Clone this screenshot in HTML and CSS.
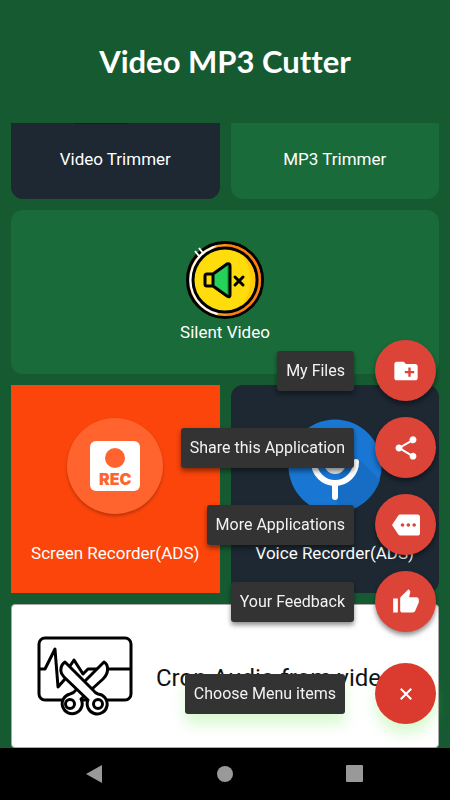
FILE: index.html
```html
<!DOCTYPE html>
<html lang="en">
<head>
<meta charset="utf-8">
<meta name="viewport" content="width=device-width, initial-scale=1">
<title>Video MP3 Cutter</title>
<link rel="stylesheet" href="styles.css">
</head>
<body>
<header class="header"><h1 class="title">Video MP3 Cutter</h1></header>

<main class="cards">
  <button class="card card--dark card--cut"><span class="peek"></span>Video Trimmer</button>
  <button class="card card--green card--cut">MP3 Trimmer</button>

  <button class="card card--green card--wide">
    <svg class="coin" viewBox="0 0 78 78" aria-hidden="true">
      <circle cx="39" cy="39" r="37.5" fill="#ff9a1a" stroke="#000" stroke-width="3"/>
      <path d="M39 3A36 36 0 0 1 39 75A52 52 0 0 0 39 3z" fill="#ff7d0c"/>
      <path d="M31 4A36 36 0 0 0 31 74L34 69A32 32 0 0 1 16 17z" fill="#fff"/>
      <circle cx="39" cy="39" r="32" fill="#ffdc0c" stroke="#000" stroke-width="3"/>
      <path d="M55 13A31 31 0 0 1 55 65A40 40 0 0 0 55 13z" fill="#ffc80c"/>
      <path d="M9 10l4 5M13 7l4 5" stroke="#fff" stroke-width="2"/>
      <path d="M27 32L41 22q4-1 4 2V54q0 3-4 1L27 45z" fill="#26d15a"/>
      <path d="M41 22q4-1 4 2V54q0 3-4 1z" fill="#1fa94b"/>
      <path d="M19 35q0-2 2-2h6V45h-6q-2 0-2-2zM27 33L41 23q3-1 3 2V54q0 3-3 1L27 45z" fill="none" stroke="#000" stroke-width="3" stroke-linejoin="round"/>
      <path d="M49 36l8 8M57 36l-8 8" stroke="#000" stroke-width="3" stroke-linecap="round"/>
    </svg>
    Silent Video
  </button>

  <button class="card card--orange card--tall">
    <span class="rec"><span class="rec-box"><span class="rec-dot"></span><span class="rec-text">REC</span></span></span>
    Screen Recorder(ADS)
  </button>
  <button class="card card--dark card--tall">
    <svg class="mic" viewBox="0 0 96 96" aria-hidden="true">
      <circle cx="48" cy="48" r="46.5" fill="#1976d2"/>
      <path d="M58 28L93 62A47 47 0 0 1 53 94L49 80z" fill="#176dc4"/>
      <rect x="37" y="18" width="22" height="38" rx="11" fill="#e4e4e4"/>
      <path d="M27 44A21 21 0 0 0 69 44M48 65V79" fill="none" stroke="#fff" stroke-width="6" stroke-linecap="round"/>
    </svg>
    Voice Recorder(ADS)
  </button>

  <button class="card card--white card--wide">
    <svg class="crop" viewBox="0 0 96 80" fill="none" stroke="#000" stroke-width="3" stroke-linejoin="round" aria-hidden="true">
      <rect x="2" y="2" width="92" height="62" rx="6"/>
      <path d="M2 33H8L18 13L21 51L28 43M33 30L37 24L46 38L51 33H94"/>
      <path d="M67 26Q72 29 70 37Q69 40 66 43L44 63A10 10 0 1 1 33 58Q37 57 39 54z" fill="#fff"/>
      <path d="M28 26L56 54Q58 57 61 58A10 10 0 1 1 51 64L27 41Q23 37 24 33Q24 29 28 26z" fill="#fff"/>
      <circle cx="33" cy="68" r="4.5"/>
      <circle cx="61" cy="68" r="4.5"/>
    </svg>
    <span class="crop-text">Crop Audio from video</span>
  </button>
</main>

<div class="dial">
  <div class="dial-row">
    <span class="tag" id="files">My Files</span>
    <button class="fab" aria-labelledby="files"><svg viewBox="0 0 24 24"><path d="M20 6h-8l-2-2H4c-1.11 0-1.99.89-1.99 2L2 18c0 1.1.9 2 2 2h16c1.1 0 2-.9 2-2V8c0-1.1-.9-2-2-2zm-1 8h-3v3h-2v-3h-3v-2h3V9h2v3h3v2z"/></svg></button>
  </div>
  <div class="dial-row">
    <span class="tag" id="share">Share this Application</span>
    <button class="fab" aria-labelledby="share"><svg viewBox="0 0 24 24"><path d="M18 16.08c-.76 0-1.44.3-1.96.77L8.91 12.7c.05-.23.09-.46.09-.7s-.04-.47-.09-.7l7.05-4.11c.54.5 1.25.81 2.04.81 1.66 0 3-1.34 3-3s-1.34-3-3-3-3 1.34-3 3c0 .24.04.47.09.7L8.04 9.81C7.5 9.31 6.79 9 6 9c-1.66 0-3 1.34-3 3s1.34 3 3 3c.79 0 1.5-.31 2.04-.81l7.12 4.16c-.05.21-.08.43-.08.65 0 1.61 1.31 2.92 2.92 2.92s2.92-1.31 2.92-2.92-1.31-2.92-2.92-2.92z"/></svg></button>
  </div>
  <div class="dial-row">
    <span class="tag" id="more">More Applications</span>
    <button class="fab" aria-labelledby="more"><svg viewBox="0 0 24 24"><path d="M22 3H7c-.69 0-1.23.35-1.59.88L0 12l5.41 8.11c.36.53.9.89 1.59.89h15c1.1 0 2-.9 2-2V5c0-1.1-.9-2-2-2zM9 13.5c-.83 0-1.5-.67-1.5-1.5s.67-1.5 1.5-1.5 1.5.67 1.5 1.5-.67 1.5-1.5 1.5zm5 0c-.83 0-1.5-.67-1.5-1.5s.67-1.5 1.5-1.5 1.5.67 1.5 1.5-.67 1.5-1.5 1.5zm5 0c-.83 0-1.5-.67-1.5-1.5s.67-1.5 1.5-1.5 1.5.67 1.5 1.5-.67 1.5-1.5 1.5z"/></svg></button>
  </div>
  <div class="dial-row">
    <span class="tag" id="feedback">Your Feedback</span>
    <button class="fab" aria-labelledby="feedback"><svg viewBox="0 0 24 24"><path d="M1 21h4V9H1v12zm22-11c0-1.1-.9-2-2-2h-6.31l.95-4.57.03-.32c0-.41-.17-.79-.44-1.06L14.17 1 7.59 7.59C7.22 7.95 7 8.45 7 9v10c0 1.1.9 2 2 2h9c.83 0 1.54-.5 1.84-1.22l3.02-7.05c.09-.23.14-.47.14-.73v-2z"/></svg></button>
  </div>
  <div class="dial-row dial-row--main">
    <span class="tag" id="choose">Choose Menu items</span>
    <button class="fab" aria-labelledby="choose"><svg viewBox="0 0 24 24"><path d="M7.5 7.5l9 9M16.5 7.5l-9 9" stroke="#fff" stroke-width="1.8"/></svg></button>
  </div>
</div>

<nav class="nav">
  <button aria-label="Back"><svg viewBox="0 0 18 18"><path d="M0 9L16 0V18z"/></svg></button>
  <button aria-label="Home"><svg viewBox="0 0 18 18"><circle cx="9" cy="9" r="8"/></svg></button>
  <button aria-label="Recent apps"><svg viewBox="0 0 18 18"><rect x="0" y="0" width="17" height="17" rx="1"/></svg></button>
</nav>
</body>
</html>
```
FILE: styles.css
```css
* { box-sizing: border-box; }

body {
  margin: 0;
  min-height: 100vh;
  display: flex;
  flex-direction: column;
  background: #165a32;
  color: #fff;
  font-family: Roboto, sans-serif;
}

button {
  border: 0;
  padding: 0;
  color: inherit;
  font: inherit;
  cursor: pointer;
}

svg { display: block; }

.header {
  height: 123px;
  display: flex;
  align-items: center;
  justify-content: center;
  padding-bottom: 2px;
}

.title {
  margin: 0;
  font: 700 31px/40px Lato, sans-serif;
  font-variant-ligatures: none;
}

.cards {
  flex: 1;
  display: grid;
  grid-template-columns: 1fr 1fr;
  grid-template-rows: auto auto auto 1fr;
  gap: 11px;
  padding: 0 11px;
}

.card {
  display: flex;
  flex-direction: column;
  align-items: center;
  border-radius: 12px;
  font-size: 17px;
  line-height: 24px;
}

.card--wide { grid-column: 1 / -1; padding: 31px 0 30px; gap: 1px; }
.card--dark { background: #1d2833; }
.card--green { background: #1a6b3a; }
.card--orange { background: #fb450a; border-radius: 0; }
.card--tall { padding: 33px 0 28px; gap: 27px; }

.card--cut {
  position: relative;
  padding: 24px 0 28px;
  border-radius: 0 0 12px 12px;
}

.peek {
  position: absolute;
  top: 0;
  left: 30%;
  width: 26%;
  height: 1px;
  background: #10241c;
}

.card--white {
  flex-direction: row;
  gap: 23px;
  padding: 31px 25px;
  border: 1px solid #a9a9a9;
  border-radius: 4px;
  background: #fff;
  color: #111;
}

.coin { width: 78px; height: 78px; }
.mic { width: 96px; height: 96px; }
.crop { width: 96px; height: 80px; flex: none; }

.crop-text {
  padding-top: 4px;
  font-size: 24px;
  line-height: 32px;
  white-space: nowrap;
}

.rec {
  width: 96px;
  height: 96px;
  display: flex;
  align-items: center;
  justify-content: center;
  border-radius: 50%;
  background: #ff642f;
  box-shadow: 0 2px 3px rgba(0, 0, 0, .25);
}

.rec-box {
  width: 50px;
  height: 50px;
  display: flex;
  flex-direction: column;
  align-items: center;
  padding-top: 7px;
  gap: 3px;
  border-radius: 6px;
  background: #fff;
}

.rec-dot {
  width: 20px;
  height: 20px;
  border-radius: 50%;
  background: #ff642f;
}

.rec-text {
  color: #ff642f;
  font: 900 16px/16px Inter, sans-serif;
}

.dial {
  position: fixed;
  right: 14px;
  bottom: 76px;
  display: flex;
  flex-direction: column;
  gap: 16px;
}

.dial-row {
  display: flex;
  align-items: center;
  justify-content: flex-end;
  gap: 21px;
}

.dial-row--main { gap: 30px; margin-top: 15px; }

.tag {
  padding: 8px 9px;
  border-radius: 3px;
  background: #333;
  font-size: 16px;
  line-height: 24px;
  color: #f2f2f2;
  box-shadow: 0 3px 5px rgba(0, 0, 0, .45);
}

.fab {
  width: 61px;
  height: 61px;
  display: flex;
  align-items: center;
  justify-content: center;
  border-radius: 50%;
  background: #db4437;
  box-shadow: 0 3px 5px rgba(0, 0, 0, .45);
}

.fab svg { width: 28px; height: 28px; fill: #fff; }
.dial-row--main .fab { background: #db3b2f; }

.dial-row--main .tag,
.dial-row--main .fab { box-shadow: 0 10px 14px rgba(130, 235, 100, .3); }

.nav {
  height: 52px;
  display: flex;
  align-items: center;
  justify-content: center;
  gap: 112px;
  background: #000;
}

.nav button { background: none; }
.nav svg { width: 18px; height: 18px; fill: #999; }
```
